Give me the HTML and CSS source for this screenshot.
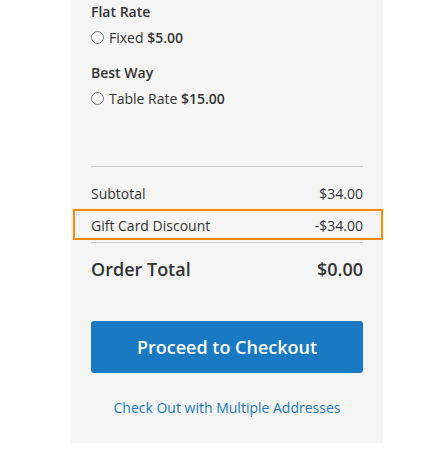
FILE: index.html
```html
<!DOCTYPE html>
<html lang="en">
<head>
    <meta charset="UTF-8">
    <meta name="viewport" content="width=device-width, initial-scale=1.0">
    <title>Cart Summary</title>
    <link rel="stylesheet" href="styles.css">
</head>
<body>
    <div class="cart-summary">
        <!-- Metodos de envio -->
        <div class="shipping-method">
            <div class="method-title">Flat Rate</div>
            <label class="method-option">
                <input type="radio" name="shipping" class="method-radio">
                <span>Fixed <strong>$5.00</strong></span>
            </label>
        </div>
        <div class="shipping-method">
            <div class="method-title">Best Way</div>
            <label class="method-option">
                <input type="radio" name="shipping" class="method-radio">
                <span>Table Rate <strong>$15.00</strong></span>
            </label>
        </div>

        <!-- Totales -->
        <div class="totals">
            <div class="totals-row">
                <span>Subtotal</span>
                <span>$34.00</span>
            </div>
            <div class="totals-row totals-row-highlight">
                <span>Gift Card Discount</span>
                <span>-$34.00</span>
            </div>
            <div class="totals-row grand-total">
                <span>Order Total</span>
                <span>$0.00</span>
            </div>
        </div>

        <button class="checkout-button">Proceed to Checkout</button>
        <a href="#" class="multi-address">Check Out with Multiple Addresses</a>
    </div>
</body>
</html>
```

FILE: styles.css
```css
body {
    margin: 0;
    background-color: #ffffff;
    font-family: 'Open Sans', 'Liberation Sans', sans-serif;
    font-size: 14px;
    color: #333333;
}

.cart-summary {
    width: 272px;
    margin-left: 71px;
    padding: 2px 20px 25px;
    background-color: #f5f5f5;
}

strong {
    font-weight: 600;
}

/* Metodos de envio */
.shipping-method + .shipping-method {
    margin-top: 16px;
}

.method-title {
    font-weight: 600;
    line-height: 20px;
}

.method-option {
    display: flex;
    align-items: center;
    height: 20px;
    margin-top: 5px;
}

.method-radio {
    width: 13px;
    height: 13px;
    margin: 0 5px 0 0;
}

/* Totales */
.totals {
    margin-top: 58px;
    padding-top: 11px;
    border-top: 1px solid #cccccc;
}

.totals-row {
    display: flex;
    justify-content: space-between;
    line-height: 32px;
}

/* Recuadro naranja alrededor del descuento */
.totals-row-highlight {
    position: relative;
    border-bottom: 1px solid #cccccc;
}

.totals-row-highlight::after {
    content: "";
    position: absolute;
    top: -1px;
    bottom: 2px;
    left: -18px;
    right: -20px;
    border: 2px solid #ff8c00;
}

.grand-total {
    margin-top: 12px;
    font-size: 18px;
    font-weight: 600;
    line-height: 28px;
}

.checkout-button {
    display: block;
    width: 100%;
    height: 52px;
    margin-top: 38px;
    border: none;
    border-radius: 3px;
    background-color: #1979c3;
    color: white;
    font-family: inherit;
    font-size: 18px;
    font-weight: 600;
    cursor: pointer;
}

.multi-address {
    display: block;
    margin-top: 25px;
    text-align: center;
    line-height: 20px;
    color: #1979c3;
    text-decoration: none;
}
```
